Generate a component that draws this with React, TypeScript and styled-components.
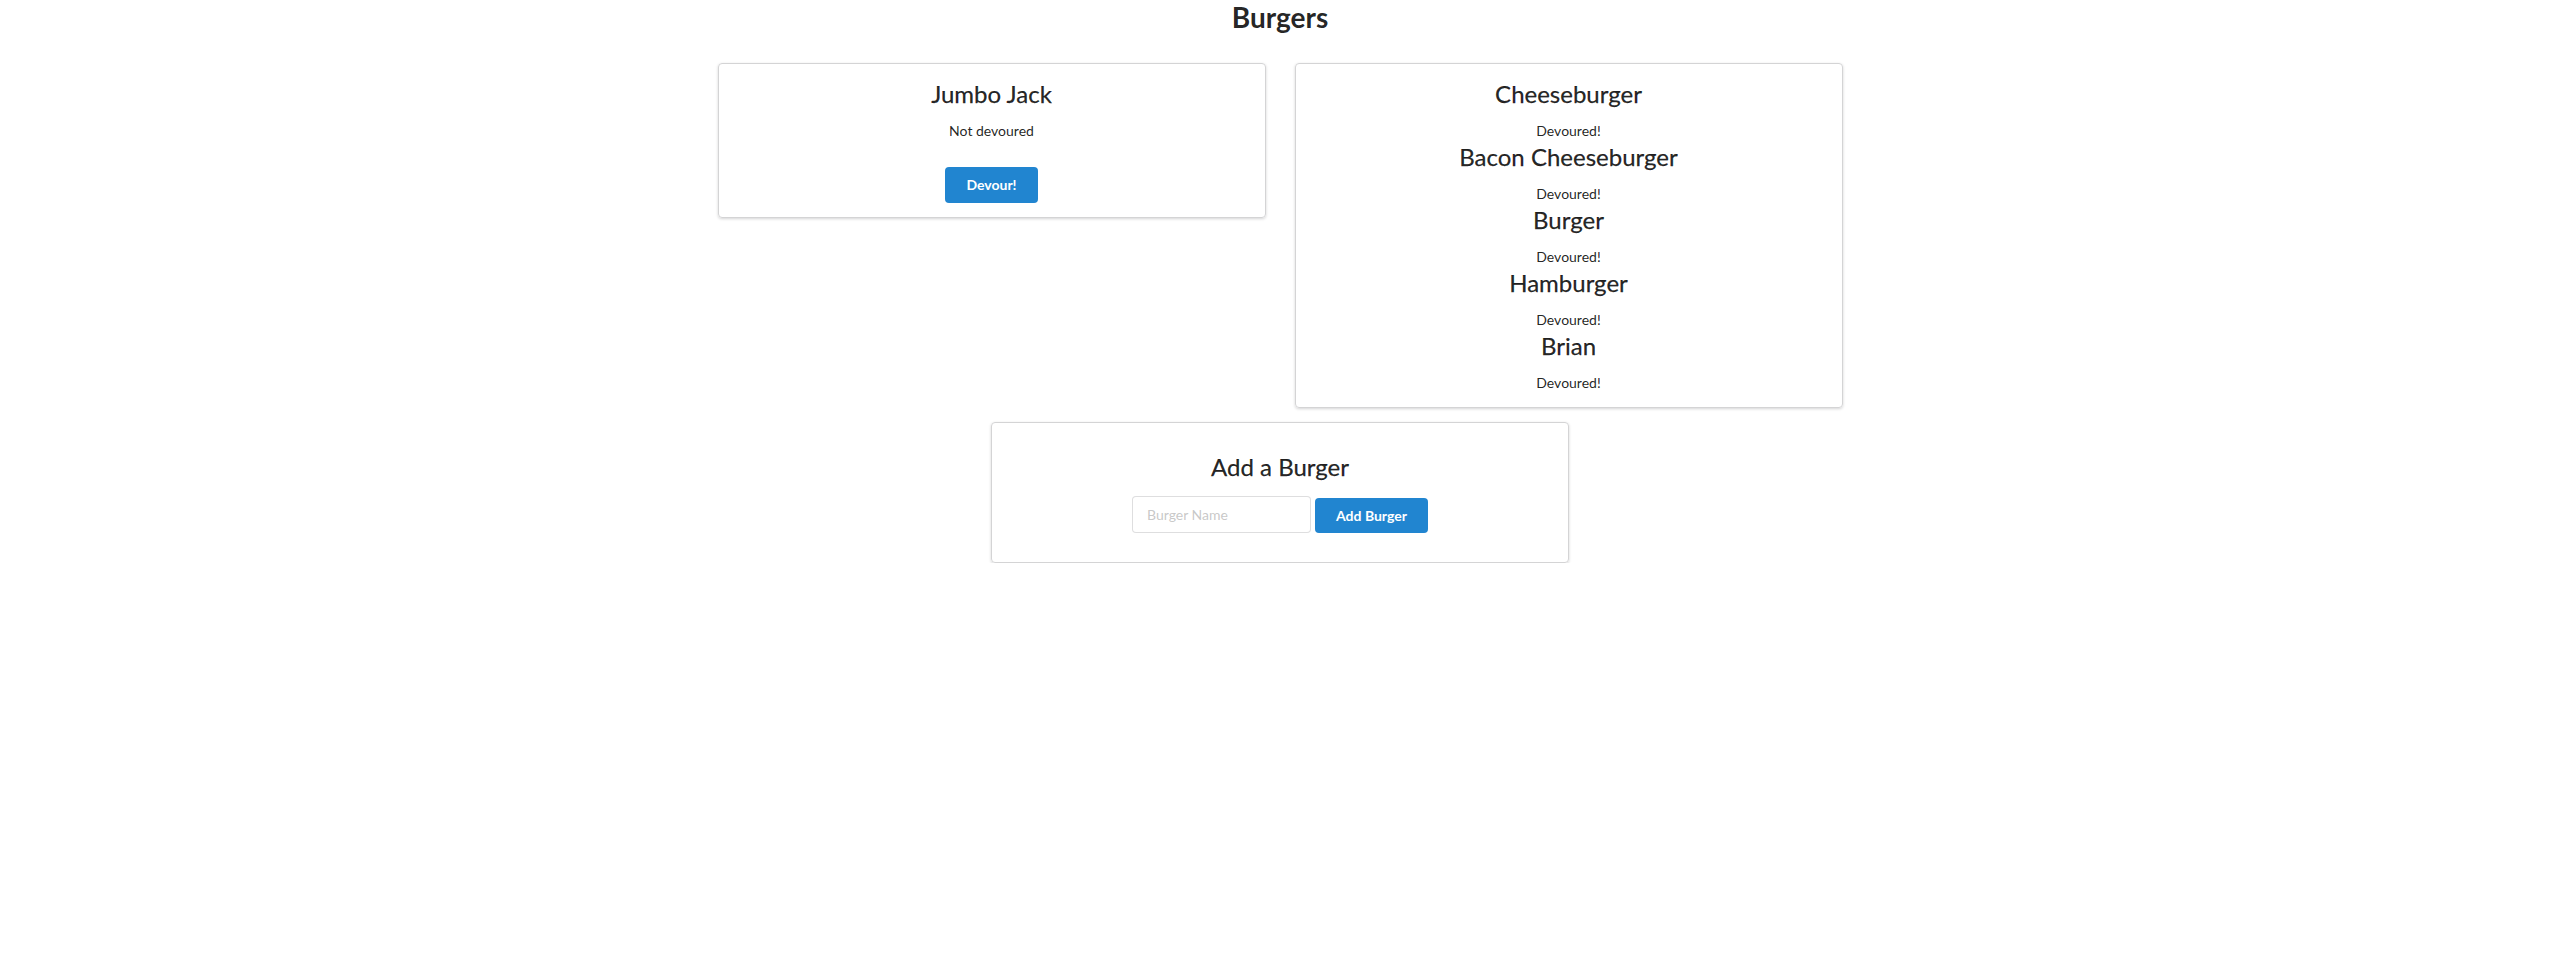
import React, { useState } from "react";
import styled, { createGlobalStyle } from "styled-components";

interface IBurger {
  id: number;
  name: string;
  devoured: boolean;
}

const initialBurgers: IBurger[] = [
  { id: 1, name: "Jumbo Jack", devoured: false },
  { id: 2, name: "Cheeseburger", devoured: true },
  { id: 3, name: "Bacon Cheeseburger", devoured: true },
  { id: 4, name: "Burger", devoured: true },
  { id: 5, name: "Hamburger", devoured: true },
  { id: 6, name: "Brian", devoured: true },
];

const App: React.FunctionComponent = () => {
  const [burgers, setBurgers] = useState<IBurger[]>(initialBurgers);
  const [name, setName] = useState("");

  const handleDevour = (id: number) => {
    setBurgers((list) =>
      list.map((b) => (b.id === id ? { ...b, devoured: true } : b))
    );
  };

  const handleAdd = (e: React.FormEvent) => {
    e.preventDefault();
    if (!name.trim()) return;
    setBurgers((list) => [
      ...list,
      { id: Date.now(), name: name.trim(), devoured: false },
    ]);
    setName("");
  };

  const waiting = burgers.filter((b) => !b.devoured);
  const eaten = burgers.filter((b) => b.devoured);

  return (
    <>
      <GlobalStyle />
      <Title>Burgers</Title>
      <Columns>
        <Card>
          {waiting.map((b) => (
            <Item key={b.id}>
              <BurgerName>{b.name}</BurgerName>
              <Status>Not devoured</Status>
              <DevourButton onClick={() => handleDevour(b.id)}>
                Devour!
              </DevourButton>
            </Item>
          ))}
        </Card>
        <Card>
          {eaten.map((b) => (
            <Item key={b.id}>
              <BurgerName>{b.name}</BurgerName>
              <Status>Devoured!</Status>
            </Item>
          ))}
        </Card>
      </Columns>
      <AddCard>
        <AddTitle>Add a Burger</AddTitle>
        <AddForm onSubmit={handleAdd}>
          <NameInput
            placeholder="Burger Name"
            value={name}
            onChange={(e) => setName(e.target.value)}
          />
          <AddButton type="submit">Add Burger</AddButton>
        </AddForm>
      </AddCard>
    </>
  );
};

const GlobalStyle = createGlobalStyle`
  body {
    margin: 0;
    background: #fff;
    font-family: Lato, "Helvetica Neue", Arial, sans-serif;
    font-size: 14px;
    line-height: 1.4285em;
    color: rgba(0, 0, 0, 0.87);
  }
`;

const Title = styled.h1`
  margin: 0;
  font-size: 28px;
  font-weight: 700;
  line-height: 35px;
  text-align: center;
`;

const Columns = styled.div`
  display: grid;
  grid-template-columns: 548px 548px;
  column-gap: 29px;
  justify-content: center;
  align-items: start;
  margin-top: 28px;
`;

const Card = styled.div`
  border: 1px solid #d4d4d5;
  border-radius: 4px;
  box-shadow: 0 1px 3px 0 #d4d4d5;
  padding: 14px 14px 14px;
  text-align: center;
`;

const Item = styled.div`
  display: flex;
  flex-direction: column;
  align-items: center;
`;

const BurgerName = styled.h2`
  margin: 0 0 12px;
  font-size: 24px;
  font-weight: 400;
  line-height: 31px;
  -webkit-text-stroke: 0.25px rgba(0, 0, 0, 0.87);
`;

const Status = styled.p`
  margin: 0;
  font-size: 14px;
  line-height: 20px;
`;

const BlueButton = styled.button`
  border: none;
  border-radius: 4px;
  background: #2185d0;
  color: #fff;
  font-family: Lato, "Helvetica Neue", Arial, sans-serif;
  font-size: 14px;
  font-weight: 700;
  line-height: 14px;
  cursor: pointer;

  &:hover {
    background: #1678c2;
  }
`;

const DevourButton = styled(BlueButton)`
  margin-top: 26px;
  padding: 11px 21px;
`;

const AddCard = styled.div`
  box-sizing: border-box;
  width: 578px;
  margin: 14px auto 0;
  border: 1px solid #d4d4d5;
  border-radius: 4px;
  box-shadow: 0 1px 3px 0 #d4d4d5;
  padding: 28px 14px 29px;
  text-align: center;
`;

const AddTitle = styled.h2`
  margin: 0 0 14px;
  font-size: 24px;
  font-weight: 400;
  line-height: 31px;
  -webkit-text-stroke: 0.25px rgba(0, 0, 0, 0.87);
`;

const AddForm = styled.form`
  display: flex;
  justify-content: center;
  align-items: flex-end;
  gap: 4px;
`;

const NameInput = styled.input`
  box-sizing: border-box;
  width: 179px;
  height: 37px;
  padding: 0 14px;
  border: 1px solid rgba(34, 36, 38, 0.15);
  border-radius: 4px;
  font-family: Lato, "Helvetica Neue", Arial, sans-serif;
  font-size: 14px;
  color: rgba(0, 0, 0, 0.87);
  outline: none;

  &::placeholder {
    color: rgba(191, 191, 191, 0.87);
  }
`;

const AddButton = styled(BlueButton)`
  height: 35px;
  padding: 0 21px;
`;

export default App;
